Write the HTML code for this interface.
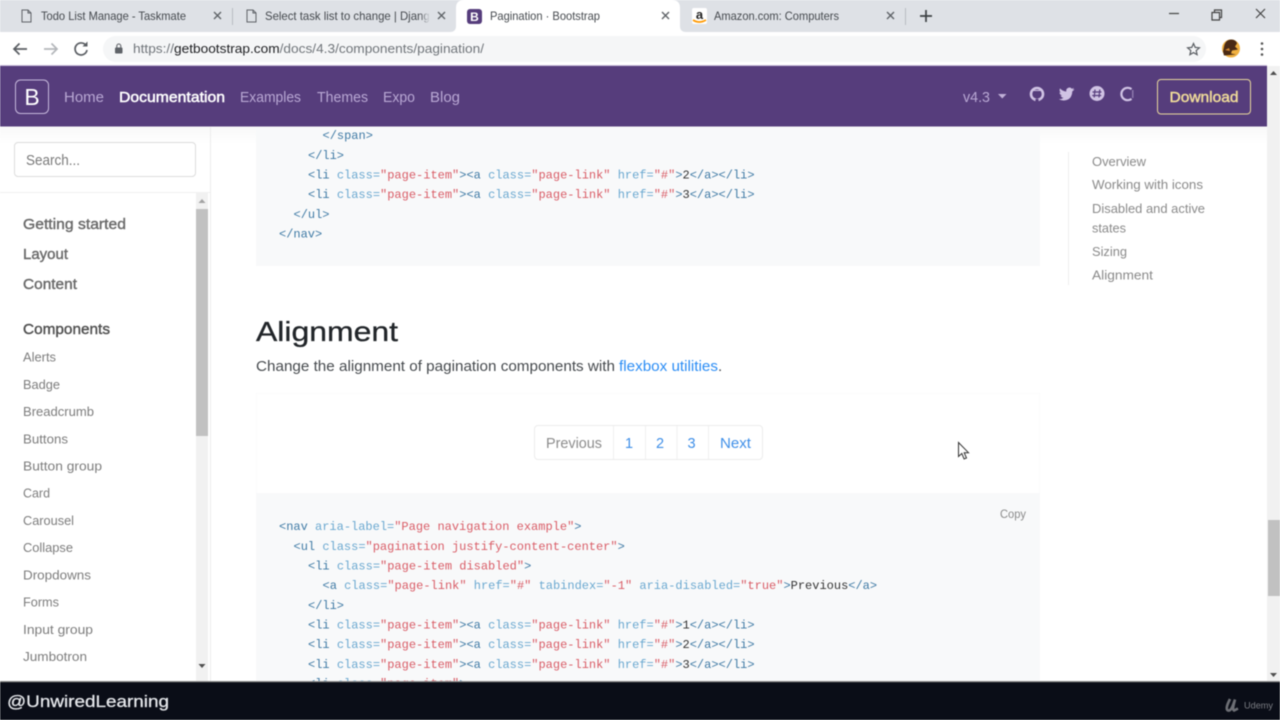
<!DOCTYPE html>
<html><head><meta charset="utf-8"><title>Pagination - Bootstrap</title>
<style>
html,body{margin:0;padding:0;width:1280px;height:720px;overflow:hidden;background:#fff}
svg{display:block;filter:blur(.4px);font-family:"Liberation Sans",sans-serif}
.c{font-family:"Liberation Mono",monospace;font-size:12px;fill:#3f7aa5;white-space:pre}
.a{fill:#6aa8d0}.s{fill:#d95c66}.t{fill:#333}
.n{font-size:15px;fill:#b9a8d4}
.tab{font-size:12px;fill:#45494e}
.h{font-size:15px;fill:#6a6a6a;stroke:#6a6a6a;stroke-width:.4px}
.i{font-size:13px;fill:#7d7d7d}
.o{font-size:13px;fill:#8a8a8a}
</style></head><body>
<svg width="1280" height="720" viewBox="0 0 1280 720" xmlns="http://www.w3.org/2000/svg">
<defs><linearGradient id="sh" x1="0" y1="0" x2="0" y2="1"><stop offset="0" stop-color="#000" stop-opacity=".06"/><stop offset="1" stop-color="#000" stop-opacity="0"/></linearGradient>
<linearGradient id="fd" x1="0" y1="0" x2="1" y2="0"><stop offset="0" stop-color="#dee1e6" stop-opacity="0"/><stop offset="1" stop-color="#dee1e6"/></linearGradient></defs>
<rect width="1280" height="720" fill="#fff"/>

<!-- tab strip -->
<rect width="1280" height="32" fill="#dee1e6"/>
<path d="M450 32q6 0 6-6V8q0-8 8-8h208q8 0 8 8v18q0 6 6 6z" fill="#fff"/>
<path d="M22 10h6l3 3v9H22z M28 10v3h3" fill="none" stroke="#5f6368" stroke-width="1"/>
<text class="tab" x="41" y="20" textLength="145" lengthAdjust="spacingAndGlyphs">Todo List Manage - Taskmate</text>
<path d="M214 12l7 7M221 12l-7 7" stroke="#5f6368" stroke-width="1.4"/>
<rect x="232" y="8" width="1" height="17" fill="#b9bcc2"/>
<path d="M247 10h6l3 3v9h-9z M253 10v3h3" fill="none" stroke="#5f6368" stroke-width="1"/>
<text class="tab" x="265" y="20" textLength="171" lengthAdjust="spacingAndGlyphs">Select task list to change | Django</text>
<rect x="420" y="8" width="10" height="18" fill="url(#fd)"/>
<rect x="430" y="8" width="7" height="18" fill="#dee1e6"/>
<path d="M438 12l7 7M445 12l-7 7" stroke="#5f6368" stroke-width="1.4"/>
<rect x="467" y="9" width="15" height="15" rx="3" fill="#563d7c"/>
<text x="474.500" y="21" text-anchor="middle" font-size="12" font-weight="700" fill="#fff">B</text>
<text class="tab" x="490" y="20" textLength="110" lengthAdjust="spacingAndGlyphs">Pagination · Bootstrap</text>
<path d="M662 12l7 7M669 12l-7 7" stroke="#5f6368" stroke-width="1.4"/>
<rect x="692" y="8" width="15" height="16" rx="2" fill="#fff"/>
<text x="699.500" y="19" text-anchor="middle" font-size="13" font-weight="700" fill="#222">a</text>
<path d="M693 20q6 4 13 0" stroke="#f90" stroke-width="1.800" fill="none"/>
<text class="tab" x="714" y="20" textLength="125" lengthAdjust="spacingAndGlyphs">Amazon.com: Computers</text>
<path d="M887 12l7 7M894 12l-7 7" stroke="#5f6368" stroke-width="1.4"/>
<rect x="905" y="8" width="1" height="17" fill="#b9bcc2"/>
<path d="M926 10v12M920 16h12" stroke="#3c4043" stroke-width="1.700"/>
<path d="M1169 13.500h10" stroke="#444" stroke-width="1.200"/>
<path d="M1212 12.500h7.500v7.500h-7.500z M1214.500 12.500v-2.500h7v7.500h-2" fill="none" stroke="#444" stroke-width="1.200"/>
<path d="M1256 9l9 9M1265 9l-9 9" stroke="#444" stroke-width="1.200"/>

<!-- toolbar -->
<rect y="32" width="1280" height="33" fill="#fff"/>
<rect x="103" y="36" width="1103" height="26" rx="13" fill="#f5f6f7"/>
<path d="M27 49H14M19.500 43.500L14 49l5.500 5.500" fill="none" stroke="#5a5e63" stroke-width="1.700"/>
<path d="M44 49h13M51.500 43.500L57 49l-5.500 5.500" fill="none" stroke="#b4b7bb" stroke-width="1.700"/>
<path d="M86 45.500A6 6 0 1 0 87 50" fill="none" stroke="#5a5e63" stroke-width="1.700"/><path d="M87.500 41.500v5h-5z" fill="#5a5e63"/>
<rect x="115" y="47.500" width="7.500" height="6" rx="1" fill="#5f6368"/><path d="M116.800 47.500v-1.500a2 2 0 0 1 4 0v1.500" fill="none" stroke="#5f6368" stroke-width="1.100"/>
<text x="133" y="53" font-size="13" textLength="351" lengthAdjust="spacingAndGlyphs" fill="#70757a">https://<tspan fill="#202124">getbootstrap.com</tspan>/docs/4.3/components/pagination/</text>
<path d="M1193.500 43.500l1.700 3.900 4.200.4-3.200 2.800.9 4.100-3.600-2.100-3.600 2.100.9-4.100-3.200-2.800 4.200-.4z" fill="none" stroke="#5a5e63" stroke-width="1.200"/>
<circle cx="1231" cy="48.500" r="9" fill="#f0b040"/>
<path d="M1224 47q1-7 7-7.500 5 0 6 4l-2 3 3 3-6 1-1 3 5 1-12 1-1-4z" fill="#4a2a14"/>
<path d="M1225 50l4-2 1 3z" fill="#d68a30"/>
<circle cx="1262" cy="43.500" r="1.300" fill="#555"/><circle cx="1262" cy="49" r="1.300" fill="#555"/><circle cx="1262" cy="54.500" r="1.300" fill="#555"/>

<!-- navbar -->
<rect y="65" width="1267" height="1" fill="#c9bdd9"/>
<rect y="66" width="1267" height="60.500" fill="#563d7c"/>
<rect x="15.500" y="80" width="33" height="33.500" rx="5" fill="none" stroke="#c6b8dc" stroke-width="1"/>
<text x="32" y="105" text-anchor="middle" font-size="23" fill="#fff">B</text>
<text class="n" x="64" y="102" textLength="40" lengthAdjust="spacingAndGlyphs">Home</text>
<text x="119" y="102" font-size="15" fill="#fff" stroke="#fff" stroke-width=".5" textLength="106" lengthAdjust="spacingAndGlyphs">Documentation</text>
<text class="n" x="240" y="102" textLength="61" lengthAdjust="spacingAndGlyphs">Examples</text>
<text class="n" x="317" y="102" textLength="51" lengthAdjust="spacingAndGlyphs">Themes</text>
<text class="n" x="383" y="102" textLength="32" lengthAdjust="spacingAndGlyphs">Expo</text>
<text class="n" x="430" y="102" textLength="30" lengthAdjust="spacingAndGlyphs">Blog</text>
<text class="n" x="963" y="102" textLength="27" lengthAdjust="spacingAndGlyphs">v4.3</text>
<path d="M998 94h8.500l-4.250 4.500z" fill="#c0b0d8"/>
<!-- github -->
<circle cx="1037" cy="94" r="6" fill="none" stroke="#d0c3e4" stroke-width="2.600"/>
<path d="M1034 99l0 2.500h6l0-2.500z" fill="#563d7c"/><path d="M1033 88l1.500 2 5 0 1.500-2 .5 3h-9z" fill="#d0c3e4"/><path d="M1034.800 98v3M1039.200 98v3" stroke="#d0c3e4" stroke-width="1.300"/>
<!-- twitter -->
<path d="M1074 89.500q-1 .6-2 .7 1-.7 1.400-1.800-1 .6-2.100.8a3.200 3.200 0 0 0-5.500 2.900q-3.700-.2-6.300-3.200-1.200 2.600 1 4.300-.8 0-1.500-.4 0 2.500 2.600 3.200-.8.200-1.500.1.700 2 3 2.200-2 1.600-4.800 1.300 2.400 1.500 5 1.400 8-.3 8.500-9.100.9-.6 1.700-1.500z" fill="#d0c3e4" transform="translate(.5,-.5)"/>
<!-- slack -->
<circle cx="1097" cy="93.500" r="7.500" fill="#d0c3e4"/>
<path d="M1095 89.500l-.8 8M1099.800 89.500l-.8 8M1092.500 92h9M1092.200 95.500h9" stroke="#563d7c" stroke-width="1.200"/>
<!-- open collective clipped -->
<path d="M1131.500 89.200a6.200 6.200 0 1 0 0 9.600" fill="none" stroke="#d0c3e4" stroke-width="2.200"/>
<rect x="1132" y="90" width="1.500" height="8" fill="#8b76ab"/>
<rect x="1157.500" y="79.500" width="93" height="34.500" rx="3.500" fill="none" stroke="#e8d79c" stroke-width="1"/>
<text x="1169.500" y="102" font-size="14.500" fill="#f0dc9a" stroke="#f0dc9a" stroke-width=".45" textLength="69" lengthAdjust="spacingAndGlyphs">Download</text>

<!-- shadow under navbar -->
<rect y="126.500" width="1267" height="18" fill="url(#sh)" opacity=".45"/>

<!-- sidebar -->
<rect x="210" y="127" width="1" height="556" fill="#ececec"/>
<rect y="192" width="210" height="1" fill="#f0f0f0"/>
<rect x="14.500" y="142.500" width="181" height="34" rx="3.500" fill="#fff" stroke="#dcdcdc"/>
<text x="26" y="165" font-size="14.500" fill="#7a7a7a" textLength="54" lengthAdjust="spacingAndGlyphs">Search...</text>
<rect x="196" y="193" width="12" height="489" fill="#f1f1f1"/>
<rect x="196" y="209" width="12" height="227" fill="#c1c1c1"/>
<path d="M202 199l-3.500 4h7z" fill="#a3a3a3"/><path d="M202 668l-3.500-4h7z" fill="#505050"/>
<text class="h" x="23" y="229" textLength="103" lengthAdjust="spacingAndGlyphs">Getting started</text>
<text class="h" x="23" y="259" textLength="45" lengthAdjust="spacingAndGlyphs">Layout</text>
<text class="h" x="23" y="289" textLength="54" lengthAdjust="spacingAndGlyphs">Content</text>
<text class="h" x="23" y="334" style="fill:#505050;stroke:#505050" textLength="87" lengthAdjust="spacingAndGlyphs">Components</text>
<text class="i" x="23" y="361.500" textLength="33" lengthAdjust="spacingAndGlyphs">Alerts</text>
<text class="i" x="23" y="389" textLength="37" lengthAdjust="spacingAndGlyphs">Badge</text>
<text class="i" x="23" y="416" textLength="71" lengthAdjust="spacingAndGlyphs">Breadcrumb</text>
<text class="i" x="23" y="443.500" textLength="45" lengthAdjust="spacingAndGlyphs">Buttons</text>
<text class="i" x="23" y="470.500" textLength="79" lengthAdjust="spacingAndGlyphs">Button group</text>
<text class="i" x="23" y="497.500" textLength="27" lengthAdjust="spacingAndGlyphs">Card</text>
<text class="i" x="23" y="525" textLength="51" lengthAdjust="spacingAndGlyphs">Carousel</text>
<text class="i" x="23" y="552" textLength="50" lengthAdjust="spacingAndGlyphs">Collapse</text>
<text class="i" x="23" y="579.500" textLength="68" lengthAdjust="spacingAndGlyphs">Dropdowns</text>
<text class="i" x="23" y="606.500" textLength="36" lengthAdjust="spacingAndGlyphs">Forms</text>
<text class="i" x="23" y="634" textLength="70" lengthAdjust="spacingAndGlyphs">Input group</text>
<text class="i" x="23" y="661" textLength="64" lengthAdjust="spacingAndGlyphs">Jumbotron</text>

<!-- code block 1 -->
<rect x="256" y="127" width="784" height="139" fill="#f8f9fa"/>
<text class="c" x="322.500" y="139">&lt;/span&gt;</text>
<text class="c" x="308" y="159">&lt;/li&gt;</text>
<text class="c" x="308" y="178.500">&lt;li <tspan class="a">class=</tspan><tspan class="s">"page-item"</tspan>&gt;&lt;a <tspan class="a">class=</tspan><tspan class="s">"page-link"</tspan> <tspan class="a">href=</tspan><tspan class="s">"#"</tspan>&gt;<tspan class="t">2</tspan>&lt;/a&gt;&lt;/li&gt;</text>
<text class="c" x="308" y="198">&lt;li <tspan class="a">class=</tspan><tspan class="s">"page-item"</tspan>&gt;&lt;a <tspan class="a">class=</tspan><tspan class="s">"page-link"</tspan> <tspan class="a">href=</tspan><tspan class="s">"#"</tspan>&gt;<tspan class="t">3</tspan>&lt;/a&gt;&lt;/li&gt;</text>
<text class="c" x="293.500" y="218">&lt;/ul&gt;</text>
<text class="c" x="279" y="237.500">&lt;/nav&gt;</text>

<!-- heading -->
<text x="256" y="341" font-size="28" fill="#212529" stroke="#212529" stroke-width=".3" textLength="142" lengthAdjust="spacingAndGlyphs">Alignment</text>
<text x="256" y="371" font-size="15" fill="#464a4e" textLength="359" lengthAdjust="spacingAndGlyphs">Change the alignment of pagination components with</text>
<text x="619" y="371" font-size="15" fill="#2b8df5" textLength="99" lengthAdjust="spacingAndGlyphs">flexbox utilities</text>
<text x="718" y="371" font-size="15" fill="#464a4e">.</text>

<!-- example -->
<rect x="256.500" y="393.500" width="783" height="100" fill="#fff" stroke="#fbfbfc" stroke-width="1"/>
<rect x="534.500" y="425.500" width="228" height="34" rx="3.500" fill="#fff" stroke="#ececec"/>
<path d="M613.500 426v33M645.500 426v33M677 426v33M708.500 426v33" stroke="#f0f0f0"/>
<text x="546" y="448" font-size="14.500" fill="#8c8c8c" textLength="56" lengthAdjust="spacingAndGlyphs">Previous</text>
<text x="625" y="448" font-size="14.500" fill="#3f8fe8">1</text>
<text x="656" y="448" font-size="14.500" fill="#3f8fe8">2</text>
<text x="687.500" y="448" font-size="14.500" fill="#3f8fe8">3</text>
<text x="720" y="448" font-size="14.500" fill="#3f8fe8" textLength="31" lengthAdjust="spacingAndGlyphs">Next</text>

<!-- code block 2 -->
<rect x="256" y="493" width="784" height="190" fill="#f8f9fa"/>
<text x="1000" y="518" font-size="11.500" fill="#8a8a8a" textLength="26" lengthAdjust="spacingAndGlyphs">Copy</text>
<text class="c" x="279" y="530">&lt;nav <tspan class="a">aria-label=</tspan><tspan class="s">"Page navigation example"</tspan>&gt;</text>
<text class="c" x="293.500" y="550">&lt;ul <tspan class="a">class=</tspan><tspan class="s">"pagination justify-content-center"</tspan>&gt;</text>
<text class="c" x="308" y="569.500">&lt;li <tspan class="a">class=</tspan><tspan class="s">"page-item disabled"</tspan>&gt;</text>
<text class="c" x="322.500" y="589">&lt;a <tspan class="a">class=</tspan><tspan class="s">"page-link"</tspan> <tspan class="a">href=</tspan><tspan class="s">"#"</tspan> <tspan class="a">tabindex=</tspan><tspan class="s">"-1"</tspan> <tspan class="a">aria-disabled=</tspan><tspan class="s">"true"</tspan>&gt;<tspan class="t">Previous</tspan>&lt;/a&gt;</text>
<text class="c" x="308" y="609">&lt;/li&gt;</text>
<text class="c" x="308" y="628.500">&lt;li <tspan class="a">class=</tspan><tspan class="s">"page-item"</tspan>&gt;&lt;a <tspan class="a">class=</tspan><tspan class="s">"page-link"</tspan> <tspan class="a">href=</tspan><tspan class="s">"#"</tspan>&gt;<tspan class="t">1</tspan>&lt;/a&gt;&lt;/li&gt;</text>
<text class="c" x="308" y="648">&lt;li <tspan class="a">class=</tspan><tspan class="s">"page-item"</tspan>&gt;&lt;a <tspan class="a">class=</tspan><tspan class="s">"page-link"</tspan> <tspan class="a">href=</tspan><tspan class="s">"#"</tspan>&gt;<tspan class="t">2</tspan>&lt;/a&gt;&lt;/li&gt;</text>
<text class="c" x="308" y="668">&lt;li <tspan class="a">class=</tspan><tspan class="s">"page-item"</tspan>&gt;&lt;a <tspan class="a">class=</tspan><tspan class="s">"page-link"</tspan> <tspan class="a">href=</tspan><tspan class="s">"#"</tspan>&gt;<tspan class="t">3</tspan>&lt;/a&gt;&lt;/li&gt;</text>
<text class="c" x="308" y="687">&lt;li <tspan class="a">class=</tspan><tspan class="s">"page-item"</tspan>&gt;</text>

<!-- toc -->
<rect x="1068" y="152" width="1" height="133" fill="#eeeeee"/>
<text class="o" x="1092" y="166" textLength="54" lengthAdjust="spacingAndGlyphs">Overview</text>
<text class="o" x="1092" y="189" textLength="111" lengthAdjust="spacingAndGlyphs">Working with icons</text>
<text class="o" x="1092" y="213" textLength="113" lengthAdjust="spacingAndGlyphs">Disabled and active</text>
<text class="o" x="1092" y="232.500" textLength="34" lengthAdjust="spacingAndGlyphs">states</text>
<text class="o" x="1092" y="256" textLength="35" lengthAdjust="spacingAndGlyphs">Sizing</text>
<text class="o" x="1092" y="279.500" textLength="61" lengthAdjust="spacingAndGlyphs">Alignment</text>

<!-- cursor -->
<path d="M958.500 442.500v14l3.300-3 2.300 5.500 2.400-1-2.300-5.300h4.300z" fill="#fff" stroke="#333" stroke-width="1"/>

<!-- page scrollbar -->
<rect x="1267" y="66" width="13" height="616" fill="#f1f1f1"/>
<rect x="1268" y="520" width="12" height="76" fill="#c1c1c1"/>
<path d="M1273.500 71l-3.500 4h7z" fill="#505050"/><path d="M1273.500 677l-3.500-4h7z" fill="#505050"/>

<!-- bottom bar -->
<rect y="682" width="1280" height="38" fill="#0a0d17"/>
<rect y="681" width="1280" height="1.200" fill="#8b8b8b"/>
<text x="7" y="707" font-size="17" fill="#e4e6ea" stroke="#e4e6ea" stroke-width=".3" textLength="162" lengthAdjust="spacingAndGlyphs">@UnwiredLearning</text>
<path d="M1230 699c-2 4-5 10-2 11.500c3 1 5-5 7-11c-1 4-3 10-1 11l4-2" fill="none" stroke="#6d6f75" stroke-width="2.600"/>
<text x="1244" y="708.500" font-size="9.500" fill="#7c7e84" textLength="29" lengthAdjust="spacingAndGlyphs">Udemy</text>
</svg>
</body></html>
